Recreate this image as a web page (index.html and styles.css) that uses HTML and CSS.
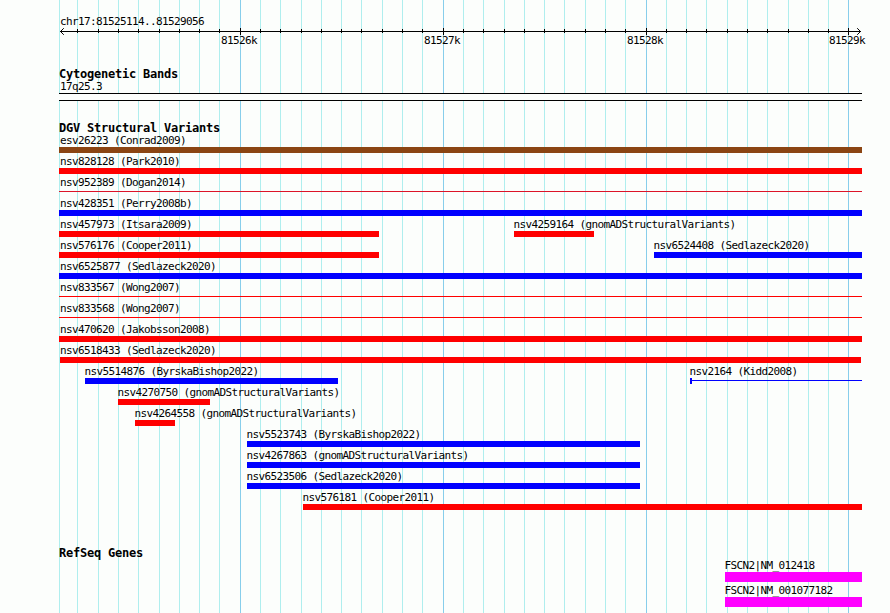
FILE: index.html
```html
<!DOCTYPE html>
<html lang="en">
<head>
    <meta charset="UTF-8">
    <meta name="viewport" content="width=device-width, initial-scale=1.0">
    <title>chr17:81525114..81529056</title>
    <link rel="stylesheet" href="styles.css">
</head>
<body>
    <div class="browser">
        <svg class="grid" width="890" height="613" shape-rendering="crispEdges">
            <path class="minor" d="M59.5 0V613M77.5 0V613M98.5 0V613M118.5 0V613M138.5 0V613M159.5 0V613M179.5 0V613M199.5 0V613M219.5 0V613M260.5 0V613M280.5 0V613M301.5 0V613M321.5 0V613M341.5 0V613M361.5 0V613M382.5 0V613M402.5 0V613M422.5 0V613M463.5 0V613M483.5 0V613M504.5 0V613M524.5 0V613M544.5 0V613M564.5 0V613M585.5 0V613M605.5 0V613M625.5 0V613M666.5 0V613M686.5 0V613M706.5 0V613M727.5 0V613M747.5 0V613M767.5 0V613M788.5 0V613M808.5 0V613M828.5 0V613"/>
            <path class="major" d="M240.5 0V613M443.5 0V613M646.5 0V613M848.5 0V613"/>
        </svg>

        <div class="tracks">
            <div class="scale">
                <div class="label">chr17:81525114..81529056</div>
                <svg class="axis" width="803" height="8" viewBox="59 27 803 8">
                    <path shape-rendering="crispEdges" d="M60 31.5H861M77.5 29V33M98.5 29V33M118.5 29V33M138.5 29V33M159.5 29V33M179.5 29V33M199.5 29V33M219.5 29V33M260.5 29V33M280.5 29V33M301.5 29V33M321.5 29V33M341.5 29V33M361.5 29V33M382.5 29V33M402.5 29V33M422.5 29V33M463.5 29V33M483.5 29V33M504.5 29V33M524.5 29V33M544.5 29V33M564.5 29V33M585.5 29V33M605.5 29V33M625.5 29V33M666.5 29V33M686.5 29V33M706.5 29V33M727.5 29V33M747.5 29V33M767.5 29V33M788.5 29V33M808.5 29V33M828.5 29V33M240.5 28V35M443.5 28V35M646.5 28V35M848.5 28V35"/>
                    <path d="M63.8 28.2L60.5 31.5L63.8 34.8M857.2 28.2L860.5 31.5L857.2 34.8"/>
                </svg>
                <div class="ticks">
                    <span>81526k</span><span>81527k</span><span>81528k</span><span>81529k</span>
                </div>
            </div>

            <h2>Cytogenetic Bands</h2>
            <div class="label">17q25.3</div>
            <div class="band"></div>

            <h2 class="dgv">DGV Structural Variants</h2>
            <div class="row"><div class="feature edge brown" style="width: 803px"><span class="label">esv26223 (Conrad2009)</span></div></div>
            <div class="row"><div class="feature edge red" style="width: 803px"><span class="label">nsv828128 (Park2010)</span></div></div>
            <div class="row"><div class="feature edge thin crimson" style="width: 803px"><span class="label">nsv952389 (Dogan2014)</span></div></div>
            <div class="row"><div class="feature edge blue" style="width: 803px"><span class="label">nsv428351 (Perry2008b)</span></div></div>
            <div class="row">
                <div class="feature edge red" style="width: 320px"><span class="label">nsv457973 (Itsara2009)</span></div>
                <div class="feature red" style="margin-left: 135px; width: 80px"><span class="label">nsv4259164 (gnomADStructuralVariants)</span></div>
            </div>
            <div class="row">
                <div class="feature edge red" style="width: 320px"><span class="label">nsv576176 (Cooper2011)</span></div>
                <div class="feature blue" style="margin-left: 275px; width: 208px"><span class="label">nsv6524408 (Sedlazeck2020)</span></div>
            </div>
            <div class="row"><div class="feature edge blue" style="width: 803px"><span class="label">nsv6525877 (Sedlazeck2020)</span></div></div>
            <div class="row"><div class="feature edge thin red" style="width: 803px"><span class="label">nsv833567 (Wong2007)</span></div></div>
            <div class="row"><div class="feature edge thin red" style="width: 803px"><span class="label">nsv833568 (Wong2007)</span></div></div>
            <div class="row"><div class="feature edge red" style="width: 803px"><span class="label">nsv470620 (Jakobsson2008)</span></div></div>
            <div class="row"><div class="feature inner red" style="margin-left: 1px; width: 801px"><span class="label">nsv6518433 (Sedlazeck2020)</span></div></div>
            <div class="row">
                <div class="feature blue" style="margin-left: 26px; width: 253px"><span class="label">nsv5514876 (ByrskaBishop2022)</span></div>
                <div class="feature capped blue" style="margin-left: 352px; width: 172px"><span class="label">nsv2164 (Kidd2008)</span></div>
            </div>
            <div class="row"><div class="feature red" style="margin-left: 59px; width: 92px"><span class="label">nsv4270750 (gnomADStructuralVariants)</span></div></div>
            <div class="row"><div class="feature red" style="margin-left: 76px; width: 40px"><span class="label">nsv4264558 (gnomADStructuralVariants)</span></div></div>
            <div class="row"><div class="feature blue" style="margin-left: 188px; width: 393px"><span class="label">nsv5523743 (ByrskaBishop2022)</span></div></div>
            <div class="row"><div class="feature blue" style="margin-left: 188px; width: 393px"><span class="label">nsv4267863 (gnomADStructuralVariants)</span></div></div>
            <div class="row"><div class="feature blue" style="margin-left: 188px; width: 393px"><span class="label">nsv6523506 (Sedlazeck2020)</span></div></div>
            <div class="row"><div class="feature red" style="margin-left: 244px; width: 559px"><span class="label">nsv576181 (Cooper2011)</span></div></div>

            <h2 class="refseq">RefSeq Genes</h2>
            <div class="row gene"><div class="feature magenta" style="margin-left: 666px; width: 137px"><span class="label">FSCN2|NM_012418</span></div></div>
            <div class="row gene"><div class="feature magenta" style="margin-left: 666px; width: 137px"><span class="label">FSCN2|NM_001077182</span></div></div>
        </div>
    </div>
</body>
</html>
```

FILE: styles.css
```css
body {
    margin: 0;
    background: #fcfefc;
    color: #000;
    font-family: "DejaVu Sans Mono", monospace;
    font-size: 11px;
    line-height: 14px;
    letter-spacing: -0.622px;
    overflow: hidden;
}
.browser {
    position: relative;
    width: 890px;
    height: 613px;
    overflow: hidden;
}
.grid {
    position: absolute;
    top: 0;
    left: 0;
}
.grid path {
    fill: none;
    stroke: #afeeee;
}
.grid .major {
    stroke: #87ceeb;
}
.tracks {
    position: relative;
    width: 803px;
    padding: 15px 0 0 59px;
}
.label {
    display: block;
    height: 12px;
    padding-left: 1px;
    white-space: nowrap;
}

/* ruler */
.axis {
    display: block;
}
.axis path {
    fill: none;
    stroke: #000;
}
.ticks {
    display: flex;
    gap: 167px;
    padding-left: 162px;
    margin-top: -1px;
    height: 12px;
}
.ticks span {
    flex: none;
    width: 36px;
}
.ticks span:nth-child(4) {
    margin-left: -1px;
}

h2 {
    margin: 22px 0 0;
    font-size: 12px;
    line-height: 12px;
    height: 12px;
    letter-spacing: -0.224px;
}
.band {
    height: 6px;
    margin-top: 1px;
    border-top: 1px solid #000;
    border-bottom: 1px solid #000;
    background: #fcfefc;
}
h2.dgv {
    margin-top: 21px;
}
h2.refseq {
    margin-top: 35px;
}

/* features */
.row {
    display: flex;
    height: 21px;
}
.feature {
    flex: none;
    height: 19px;
}
.feature::after {
    content: '';
    display: block;
    height: 6px;
    margin-top: 1px;
    background: currentColor;
}
.feature .label {
    padding-left: 0;
    margin-left: -0.5px;
    color: #000;
}
.feature.edge .label {
    margin-left: 1px;
}
.feature.inner .label {
    margin-left: 0;
}
.feature.thin::after {
    height: 1px;
    margin-top: 3px;
}
.feature.capped::after {
    background: linear-gradient(currentColor, currentColor) 0 0 / 2px 6px no-repeat,
                linear-gradient(currentColor, currentColor) 0 2px / 100% 1px no-repeat;
}
.gene {
    height: 25px;
}
.gene .feature::after {
    height: 10px;
}

.brown { color: #8b4513; }
.red { color: #f00; }
.crimson { color: #dc1428; }
.blue { color: #00f; }
.magenta { color: #f0f; }
```
